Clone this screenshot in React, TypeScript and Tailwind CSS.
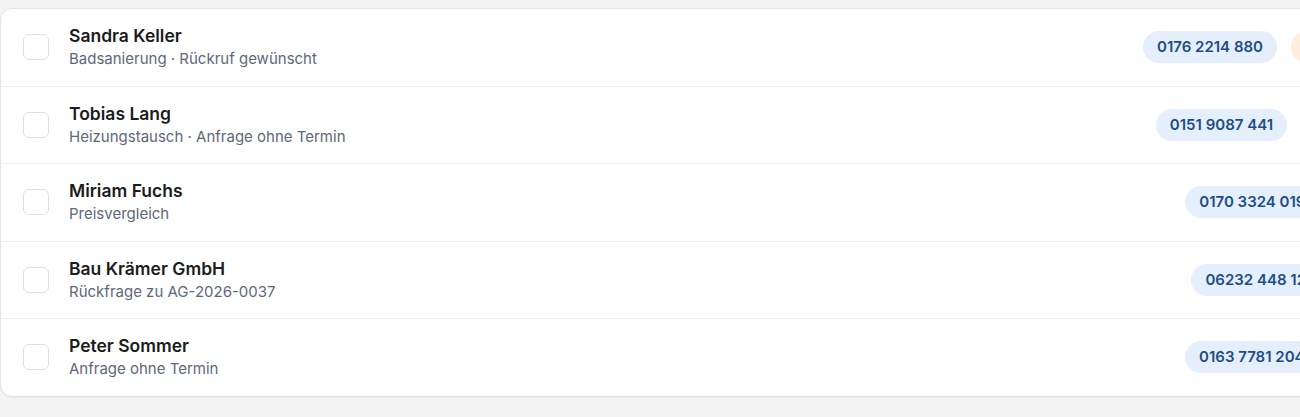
const rows = [
  { name: "Sandra Keller", note: "Badsanierung · Rückruf gewünscht", phone: "0176 2214 880", status: "Rückruf heute", tone: "bg-[#fdeedd] text-[#a8561a]", tail: "w-[206px]" },
  { name: "Tobias Lang", note: "Heizungstausch · Anfrage ohne Termin", phone: "0151 9087 441", status: "Neu", tone: "bg-[#f1f1f1] text-[#555]", tail: "w-[196px]" },
  { name: "Miriam Fuchs", note: "Preisvergleich", phone: "0170 3324 0198", status: "Angebot", tone: "bg-[#f1f1f1] text-[#555]", tail: "w-[154px]" },
  { name: "Bau Krämer GmbH", note: "Rückfrage zu AG-2026-0037", phone: "06232 448 1235", status: "Offen", tone: "bg-[#f1f1f1] text-[#555]", tail: "w-[144px]" },
  { name: "Peter Sommer", note: "Anfrage ohne Termin", phone: "0163 7781 2045", status: "Neu", tone: "bg-[#f1f1f1] text-[#555]", tail: "w-[155px]" },
]

export default function App() {
  return (
    <div className="min-h-[417px] w-full overflow-hidden bg-[#f4f4f4] pt-2 font-['Inter',sans-serif]">
      <div className="w-[1520px] rounded-xl border border-[#e3e3e3] bg-white shadow-[0_1px_2px_rgba(0,0,0,0.05)]">
        {rows.map((r, i) => (
          <div
            key={r.name}
            className={`flex items-center py-4 pl-[22px] pr-[22px] ${i < rows.length - 1 ? "border-b border-[#efefef]" : ""}`}
          >
            <div className="h-[26px] w-[26px] shrink-0 rounded-md border border-[#dedede] bg-white" />
            <div className="ml-5 flex flex-col gap-0.5">
              <div className="text-[17.5px] font-semibold leading-[22px] text-[#1c1c1c]">{r.name}</div>
              <div className="text-[15px] leading-[20.5px] text-[#5d6878]">{r.note}</div>
            </div>
            <div className="ml-auto flex items-center gap-3.5">
              <span className="flex h-[32px] items-center rounded-full bg-[#e4effb] px-3.5 text-[15px] font-semibold text-[#1e4d86]">
                {r.phone}
              </span>
              <span className={`flex h-[32px] items-center rounded-full px-3.5 text-[14px] font-semibold ${r.tone} ${r.tail}`}>
                {r.status}
              </span>
            </div>
          </div>
        ))}
      </div>
    </div>
  )
}
